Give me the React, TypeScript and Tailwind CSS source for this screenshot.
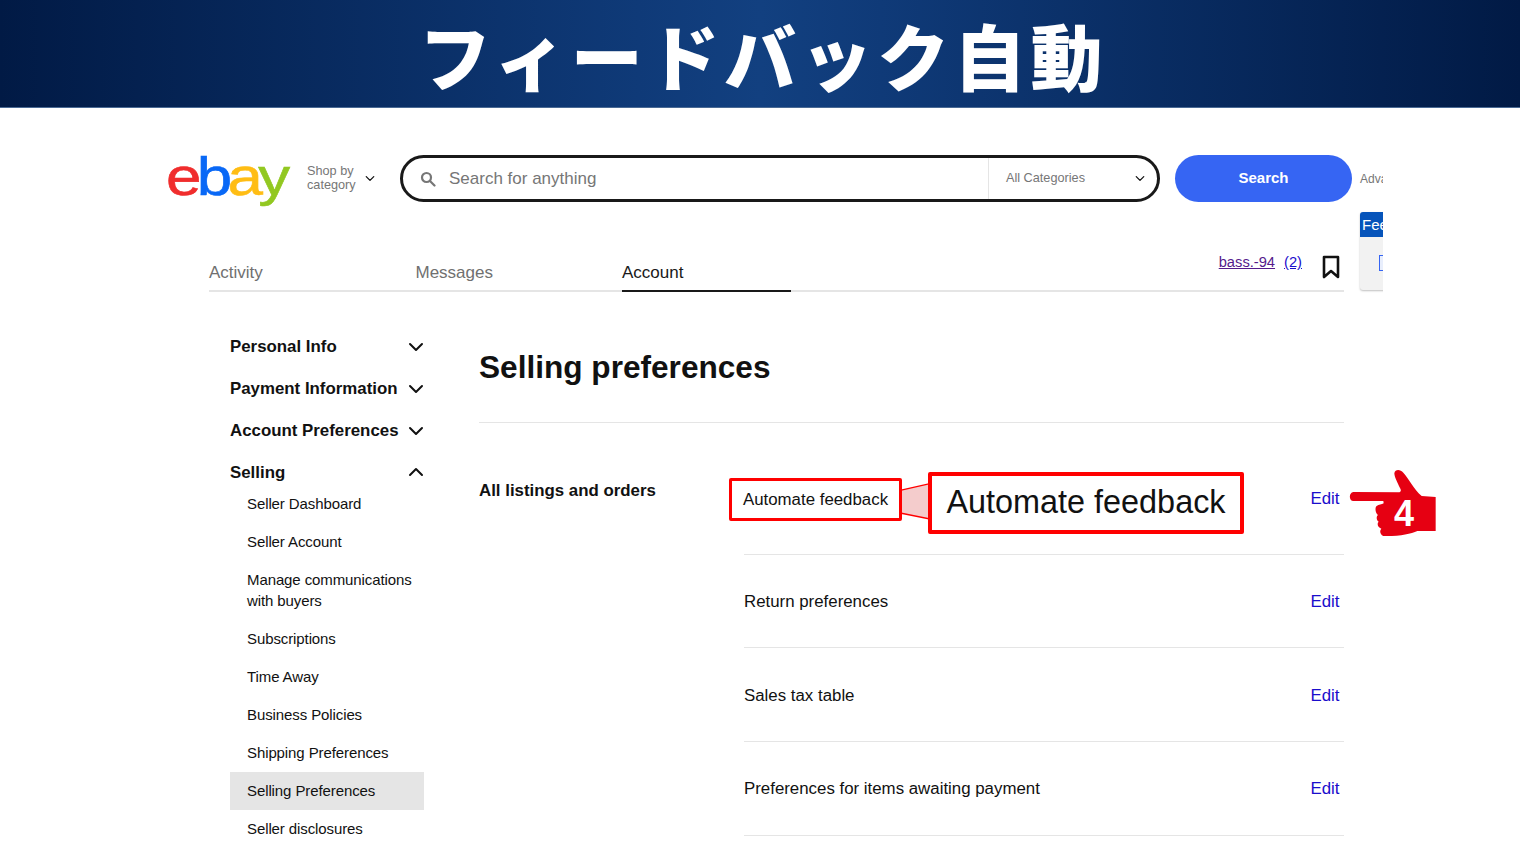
import React from "react";

const Chevron = ({ up = false, className = "" }: { up?: boolean; className?: string }) => (
  <svg viewBox="0 0 16 10" className={`shrink-0 ${className}`} fill="none" stroke="currentColor" strokeWidth="2" strokeLinecap="round" strokeLinejoin="round">
    <path d={up ? "M2 8 L8 2 L14 8" : "M2 2 L8 8 L14 2"} />
  </svg>
);

const SideHead = ({ label, up = false }: { label: string; up?: boolean }) => (
  <div className="flex h-[42px] items-center justify-between text-[16.85px] font-bold text-[#111]">
    <span>{label}</span>
    <Chevron up={up} className={`h-[10px] w-[16px] text-[#111] ${up ? "-mt-[2px]" : ""}`} />
  </div>
);

const SideItem = ({ children, active = false }: { children: React.ReactNode; active?: boolean }) => (
  <div className={`min-h-[38px] pb-[9px] pl-[17px] pt-[8px] text-[15px] leading-[21px] tracking-[-0.1px] text-[#111] ${active ? "bg-[#e5e5e5]" : ""}`}>
    {children}
  </div>
);

const PrefRow = ({ label, first = false }: { label: string; first?: boolean }) => (
  <div className={`flex h-[93.7px] items-center justify-between border-b border-[#e5e5e5] pr-[4.5px] text-[16.85px] text-[#111] ${first ? "pb-[20px] pt-[2px]" : "pt-[1px]"}`}>
    <span>{label}</span>
    <span className="text-[#1a0dcc]">Edit</span>
  </div>
);

export default function App() {
  return (
    <div className="relative h-[856px] w-[1520px] overflow-hidden bg-white font-['Liberation_Sans',Arial,sans-serif]">
      <div className="flex h-[108px] items-center justify-center border-b border-[#4a6a94] bg-[linear-gradient(to_right,#011a45_0%,#0f3a78_42%,#124080_50%,#0f3a78_58%,#011a45_100%)]">
        <h1 className="pl-[6px] font-['Noto_Sans_CJK_JP',sans-serif] text-[72px] font-black leading-none tracking-[4.6px] text-white">フィードバック自動</h1>
      </div>

      <div className="relative ml-[166px] h-[748px] w-[1217px] overflow-hidden">
        <div className="flex items-start pt-[47px]">
          <div className="flex h-[48px] w-[124px] shrink-0 origin-left scale-x-[1.18] items-center text-[54px] leading-none tracking-[-4px] [-webkit-text-stroke:0.6px_currentColor]">
            <span className="-mt-[7px] text-[#f02d2d]">e</span>
            <span className="-mt-[7px] text-[#0968f6]">b</span>
            <span className="-mt-[7px] text-[#ffbd14]">a</span>
            <span className="-mt-[7px] text-[#92c821]">y</span>
          </div>
          <div className="ml-[17px] mt-[9px] w-[52px] shrink-0 text-[12.7px] leading-[14px] text-[#767676]">Shop by category</div>
          <Chevron className="ml-[6px] mt-[20px] h-[7px] w-[10px] text-[#111]" />
          <div className="ml-[25px] flex h-[47px] w-[760px] shrink-0 items-center rounded-[24px] border-[3px] border-[#191919] bg-white">
            <svg viewBox="0 0 16 16" className="ml-[17px] h-[16px] w-[16px] text-[#767676]" fill="none" stroke="currentColor" strokeWidth="2.2" strokeLinecap="round">
              <circle cx="6.5" cy="6.5" r="4.5" />
              <path d="M10 10 L14.5 14.5" />
            </svg>
            <span className="ml-[13px] flex-1 text-[17px] text-[#767676]">Search for anything</span>
            <div className="flex h-[41px] w-[169px] items-center justify-between border-l border-[#e5e5e5] pl-[17px] pr-[12px] text-[12.7px] text-[#767676]">
              <span>All Categories</span>
              <Chevron className="h-[7px] w-[10px] text-[#111]" />
            </div>
          </div>
          <div className="ml-[15px] flex h-[47px] w-[177px] shrink-0 items-center justify-center rounded-[24px] bg-[#3665f3] text-[15px] font-bold text-white">Search</div>
          <span className="ml-[8px] mt-[15px] shrink-0 whitespace-nowrap text-[12px] text-[#767676]">Advanced</span>
        </div>

        <div className="ml-[43px] mt-[47px] flex h-[42px] w-[1135px] items-center border-b-2 border-[#e5e5e5] text-[17px]">
          <span className="w-[206.5px] pt-[5px] text-[#707070]">Activity</span>
          <span className="w-[206.5px] pt-[5px] text-[#707070]">Messages</span>
          <span className="-mb-[2px] h-[42px] w-[169px] border-b-2 border-[#191919] pt-[10px] text-[#191919]">Account</span>
          <div className="ml-auto flex items-center pr-[4px]">
            <span className="mb-[15px] text-[14.7px] text-[#551a8b] underline">bass.-94</span>
            <span className="mb-[15px] ml-[9px] text-[14.7px] text-[#1a0dcc] underline">(2)</span>
            <svg viewBox="0 0 18 24" className="mb-[6px] ml-[20px] h-[24px] w-[18px]" fill="none" stroke="#111" strokeWidth="2.6" strokeLinejoin="round">
              <path d="M2 2 H16 V22 L9 16 L2 22 Z" />
            </svg>
          </div>
        </div>

        <div className="absolute left-[1194px] top-[104px] h-[78px] w-[40px] overflow-hidden rounded-[3px] bg-[#f2f2f2] shadow-[0_1px_2px_rgba(0,0,0,0.25)]">
          <div className="h-[25px] bg-[#0654ba] pl-[2px] text-[15px] leading-[25px] text-white">Feedback</div>
          <div className="ml-[19px] mt-[18px] h-[16px] w-[10px] border border-[#3665f3] bg-[#e8eefc]"></div>
        </div>

        <div className="flex">
          <aside className="ml-[64px] mt-[34px] w-[194px] shrink-0">
            <SideHead label="Personal Info" />
            <SideHead label="Payment Information" />
            <SideHead label="Account Preferences" />
            <SideHead label="Selling" up />
            <div className="-mt-[9px]">
              <SideItem>Seller Dashboard</SideItem>
              <SideItem>Seller Account</SideItem>
              <SideItem>Manage communications with buyers</SideItem>
              <SideItem>Subscriptions</SideItem>
              <SideItem>Time Away</SideItem>
              <SideItem>Business Policies</SideItem>
              <SideItem>Shipping Preferences</SideItem>
              <SideItem active>Selling Preferences</SideItem>
              <SideItem>Seller disclosures</SideItem>
            </div>
          </aside>

          <main className="ml-[55px] mt-[55px] w-[865px]">
            <h2 className="border-b border-[#e5e5e5] pb-[35px] text-[31.6px] font-bold leading-[40px] text-[#111]">Selling preferences</h2>
            <div className="flex pt-[38px]">
              <div className="w-[265px] pt-[20px] text-[16.85px] font-bold leading-[20px] text-[#111]">All listings and orders</div>
              <div className="flex-1">
                <PrefRow first label="Automate feedback" />
                <PrefRow label="Return preferences" />
                <PrefRow label="Sales tax table" />
                <PrefRow label="Preferences for items awaiting payment" />
              </div>
            </div>
          </main>
        </div>
      </div>

      <svg viewBox="0 0 315 255" className="absolute left-[1340px] top-[460px] h-[85px] w-[105px]">
        <path fill="#e60012" d="M40 96 L178 97 C183 95 184 90 180 84 C172 68 163 50 163 40 C165 28 180 27 190 38 C205 55 222 88 245 108 L287 111 L287 213 L232 213 C212 222 180 229 130 228 C120 224 118 212 124 206 C113 203 110 190 116 185 C108 180 109 168 114 165 C106 160 104 142 110 138 C116 134 125 133 131 130 L130 123 L40 123 C26 122 26 98 40 96 Z" />
      </svg>
      <span className="absolute left-[1394px] top-[496px] text-[36px] font-bold leading-[36px] text-white">4</span>

      <svg viewBox="0 0 30 60" className="absolute left-[900px] top-[483px] h-[40px] w-[30px]" preserveAspectRatio="none">
        <path d="M0 11 L30 1 L30 54 L0 45 Z" fill="#f4cccc" stroke="#ff0000" strokeWidth="2" />
      </svg>
      <div className="absolute left-[729px] top-[478px] flex h-[43px] w-[173px] items-center justify-center rounded-[2px] border-[3px] border-[#ff0000] bg-white text-[16.85px] text-[#111]">Automate feedback</div>
      <div className="absolute left-[928px] top-[472px] flex h-[62px] w-[316px] items-center justify-center rounded-[2px] border-[4px] border-[#ff0000] bg-white pb-[2px] text-[32.4px] text-[#111]">Automate feedback</div>
    </div>
  );
}
